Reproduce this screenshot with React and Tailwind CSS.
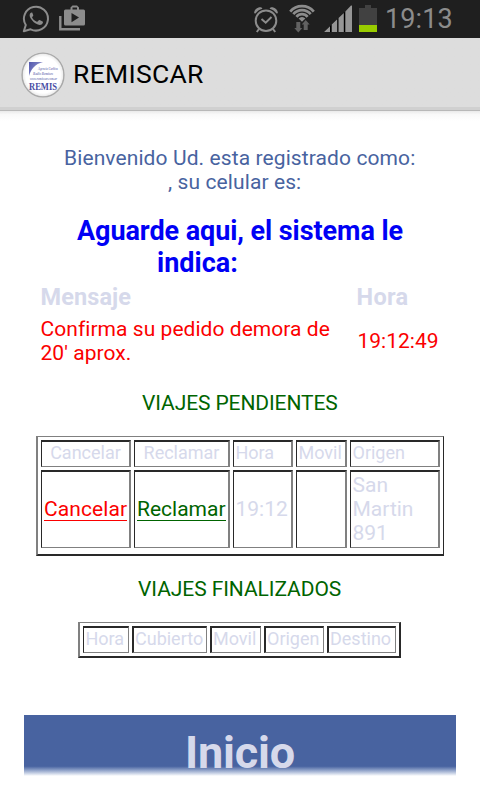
import React from "react";

const pending = ["Cancelar", "Reclamar", "Hora", "Movil", "Origen"];
const finished = ["Hora", "Cubierto", "Movil", "Origen", "Destino"];
const cell = "flex items-center border-t-2 border-l border-r-2 border-b border-t-[#292929] border-l-[#292929] border-r-[#808080] border-b-[#808080] whitespace-nowrap";

function StatusBar() {
  return (
    <div className="flex h-[38px] shrink-0 items-start bg-[#1f1f1f]">
      <svg className="ml-[22px] mt-[5px] shrink-0" width="29" height="28" viewBox="0 0 29 28">
        <path d="M1.8 26.3 3.8 20A12 11.900 0 1 1 8.600 24.300Z" fill="none" stroke="#8c8c8c" strokeWidth="2" strokeLinejoin="round" />
        <path d="M10.2 7.600c-.5-.3-1.3-.1-1.7.4-1.2 1.3-1.1 3.3.1 5.3 1.8 3 4.3 5.3 7.3 6.3 2 .7 4.2.3 4.9-1.5.3-.8.2-1.4-.2-1.6l-3-1.5c-.5-.2-.8 0-1.1.4l-.9 1.1c-.3.4-.7.4-1.2.1-1.9-.9-3.2-2.2-4.2-3.8-.2-.4-.1-.7.2-1l.7-.9c.2-.3.2-.6.1-.9Z" fill="#8c8c8c" />
      </svg>
      <svg className="ml-[7px] mt-[4px] shrink-0" width="28" height="28" viewBox="0 0 28 28">
        <path d="M2.300 12v13.200h19.700" fill="none" stroke="#8c8c8c" strokeWidth="2.400" />
        <path fillRule="evenodd" d="M7.500 5.500h5V3.500l2-2h4.500l2 2v2h4.500q1.500 0 1.500 1.500v13q0 1.500-1.500 1.500h-18q-1.500 0-1.500-1.500v-13q0-1.500 1.500-1.500ZM14.500 5.500h4.500V3.500h-4.500ZM13.500 9v9.200l7.500-4.600Z" fill="#8c8c8c" />
      </svg>
      <svg className="ml-[167px] mt-[6px] shrink-0" width="27" height="27" viewBox="0 0 27 27">
        <circle cx="13" cy="14.700" r="10.300" fill="none" stroke="#8c8c8c" strokeWidth="2" />
        <path d="m8.500 13 4.200 3.700 5.800-5.700M6 23l-2.200 3M20 23l2.200 3" fill="none" stroke="#8c8c8c" strokeWidth="2" />
        <path d="M1.200 7.300C.8 4 4.300.7 8.200 1.200L9.500 2.800C6.300 3.600 4.200 5.200 2.500 7.600ZM24.800 7.300C25.200 4 21.700.7 17.800 1.200L16.500 2.800C19.700 3.600 21.800 5.200 23.500 7.600Z" fill="#8c8c8c" />
      </svg>
      <svg className="ml-[9px] mt-[4px] shrink-0" width="27" height="29" viewBox="0 0 27 29">
        <g fill="none" stroke="#8c8c8c" strokeWidth="2.700">
          <path d="M1.200 7.600A15.400 15.400 0 0 1 24.800 7.600" />
          <path d="M4.300 10.200A11.300 11.300 0 0 1 21.700 10.200" />
          <path d="M7.400 12.800A7.300 7.300 0 0 1 18.600 12.800" />
        </g>
        <path d="M9.600 14.600A4.500 4.500 0 0 1 16.400 14.600L13 17.800Z" fill="#8c8c8c" />
        <path d="M7.300 18h4v6h2l-4 4.500L5.300 24h2ZM14.700 26v-5.500h-2l4-4.500 4 4.500h-2V26Z" fill="#626262" />
      </svg>
      <svg className="ml-[8px] mt-[5px] shrink-0" width="28" height="27" viewBox="0 0 28 27">
        <path d="M0 27 28 0V27Z" fill="#000" />
        <path d="M0 27 6 21.300V27ZM7.700 19.600 13.200 14.300V27H7.700ZM14.500 13 19.800 7.900V27h-5.300ZM21.300 6.500 27 .500h1V27h-6.700Z" fill="#969696" />
      </svg>
      <svg className="ml-[7px] mt-[5px] shrink-0" width="18" height="27" viewBox="0 0 18 27">
        <path d="M6 0h6v3h6v17H0V3h6Z" fill="#414141" />
        <path d="M0 20h18v7H0Z" fill="#99cc00" />
      </svg>
      <span className="ml-[8px] mt-[3px] text-[27px] leading-8 tracking-[0.1px] text-[#8c8c8c]">19:13</span>
    </div>
  );
}

function Logo() {
  return (
    <svg className="ml-[21px] mt-[13px] shrink-0" width="45" height="48" viewBox="0 0 45 48">
      <defs>
        <radialGradient id="disc">
          <stop offset="0.82" stopColor="#fff" />
          <stop offset="0.94" stopColor="#eee" />
          <stop offset="1" stopColor="#aaa" />
        </radialGradient>
        <linearGradient id="corner" x1="0" y1="0" x2="1" y2="0.600">
          <stop offset="0" stopColor="#5358ae" />
          <stop offset="1" stopColor="#9b9ed0" />
        </linearGradient>
      </defs>
      <ellipse cx="22" cy="24" rx="21" ry="22" fill="url(#disc)" stroke="#a8a8a8" strokeWidth="1.200" />
      <path d="M8 11h14C14 13 10 18 8 25Z" fill="url(#corner)" />
      <g fill="#8486be" fontFamily="Liberation Serif, serif" fontStyle="italic" fontWeight="bold">
        <text x="17" y="18.500" fontSize="3.500" textLength="20" lengthAdjust="spacingAndGlyphs">Agencia Carlitos</text>
        <text x="12" y="23.700" fontSize="3.500" textLength="20" lengthAdjust="spacingAndGlyphs">Radio Remises</text>
        <text x="9" y="28.700" fontSize="3.200" textLength="27" lengthAdjust="spacingAndGlyphs">www.remiscar.com.ar</text>
      </g>
      <text x="8" y="39" fill="#484ca4" fontFamily="Liberation Serif, serif" fontWeight="bold" fontSize="9.500" textLength="28" lengthAdjust="spacingAndGlyphs">REMIS</text>
    </svg>
  );
}

export default function App() {
  return (
    <div className="flex h-[800px] w-[480px] flex-col overflow-hidden bg-white font-['Roboto',sans-serif] text-[21px] leading-6 text-[#d6d9eb]">
      <StatusBar />
      <header className="flex h-[73px] shrink-0 items-start border-b border-[#b8b8b8] bg-linear-to-b from-[#ddd] from-[95.8%] to-[#d0d0d0] to-[95.8%]">
        <Logo />
        <h1 className="ml-[7px] mt-[20px] text-[26.5px] leading-8 tracking-[0.3px] text-black">REMISCAR</h1>
      </header>
      <div className="h-[10px] shrink-0 bg-linear-to-b from-[#eaeaea] via-[#f9f9f9] via-[35%] to-white" />

      <main className="flex flex-col">
        <div className="mt-[25px] tracking-[0.1px] text-[#4863a0]">
          <p className="pl-[64px] whitespace-nowrap">Bienvenido Ud. esta registrado como:</p>
          <p className="pl-[168px]">, su celular es:</p>
        </div>
        <h2 className="mt-[21px] text-[27px] leading-8 font-bold text-[#0000f5]">
          <span className="block pl-[77px] tracking-[-0.07px] whitespace-nowrap">Aguarde aqui, el sistema le</span>
          <span className="block pl-[157px]">indica:</span>
        </h2>
        <div className="mt-[5px] grid grid-cols-[316px_1fr] pl-[40.5px] text-[23.5px] leading-[27px] font-bold tracking-[0.1px]">
          <span>Mensaje</span>
          <span className="tracking-[0.3px]">Hora</span>
        </div>
        <div className="mt-[6px] grid grid-cols-[317px_1fr] items-center pl-[40.5px] text-[#fb0000]">
          <p className="tracking-[0.05px] whitespace-nowrap">Confirma su pedido demora de<br />20' aprox.</p>
          <span>19:12:49</span>
        </div>

        <h3 className="mt-[26px] pl-[142px] tracking-[-0.1px] text-[#006400]">VIAJES PENDIENTES</h3>
        <div className="mt-[21px] ml-[36px] grid h-[120px] w-[408px] grid-cols-[90px_96px_60px_51px_90px] grid-rows-[27px_78px] gap-[3px] border-t border-r border-b-2 border-l-2 border-t-[#808080] border-r-[#292929] border-b-[#292929] border-l-[#808080] p-[3px]">
          {pending.map((t, i) => (
            <div key={t} className={`${cell} text-[18px] ${i < 2 ? "justify-center" : "pl-[1.5px]"}`}>
              <span className="-mt-[2px]">{t}</span>
            </div>
          ))}
          <div className={`${cell} pl-[2px] text-[#fb0000]`}><span className="mt-px border-b border-[#fb0000] leading-[21px] tracking-[0.1px]">Cancelar</span></div>
          <div className={`${cell} pl-[2px] text-[#006400]`}><span className="mt-px border-b border-[#006400] leading-[21px]">Reclamar</span></div>
          <div className={`${cell} pl-[1.5px]`}><span className="-mt-[2px]">19:12</span></div>
          <div className={cell} />
          <div className={`${cell} pl-[1.5px]`}><p className="-mt-[2px]">San<br />Martin<br />891</p></div>
        </div>

        <h3 className="mt-[21px] pl-[138px] tracking-[-0.07px] text-[#006400]">VIAJES FINALIZADOS</h3>
        <div className="mt-[21px] ml-[78px] grid h-[36px] w-[323px] grid-cols-[46px_75px_51px_60px_69px] grid-rows-[27px] gap-[3px] border-t border-r-2 border-b-2 border-l-2 border-t-[#808080] border-r-[#292929] border-b-[#292929] border-l-[#808080] p-[3px]">
          {finished.map((t, i) => (
            <div key={t} className={`flex items-center border-t-2 border-r border-b border-t-[#292929] border-l-[#292929] border-r-[#808080] border-b-[#808080] text-[18px] ${i === 0 ? "border-l pl-[1.5px]" : "border-l-2 pl-px"}`}>
              <span className="-mt-[2px]">{t}</span>
            </div>
          ))}
        </div>

        <button className="mt-[57px] ml-[24px] flex h-[61px] w-[432px] items-start bg-linear-to-b from-[#4863a0] from-[84%] to-white to-[100%] pl-[161px] text-[45px] leading-[44px] font-bold tracking-[-0.2px]">
          <span className="mt-[16px]">Inicio</span>
        </button>
      </main>
    </div>
  );
}
